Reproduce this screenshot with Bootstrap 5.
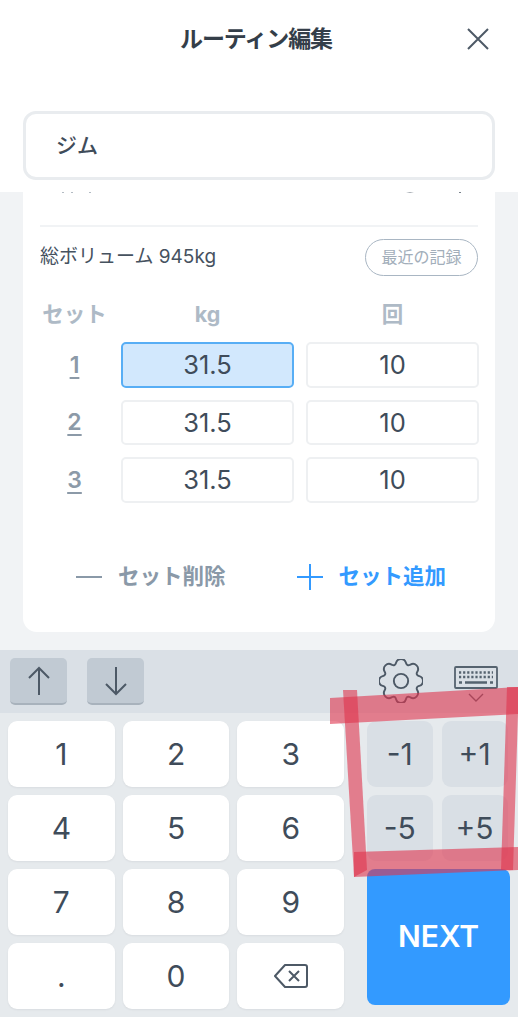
<!DOCTYPE html>
<html lang="ja">

<head>
    <meta charset="UTF-8">
    <meta name="viewport" content="width=device-width, initial-scale=1.0">
    <title>ルーティン編集</title>
    <link href="https://cdn.jsdelivr.net/npm/bootstrap@5.3.0/dist/css/bootstrap.min.css" rel="stylesheet">
    <style>
        html, body {
            height: 1024px;
            overflow: hidden;
        }

        body {
            position: relative;
            background: #fff;
            color: #3f4c5a;
            font-family: Inter, "Noto Sans CJK JP", sans-serif;
        }

        .top-area {
            height: 192px;
            padding: 0 23px;
        }

        .title-bar {
            height: 78px;
            padding: 0 6px 0 0;
        }

        .title-text {
            font-size: 23px;
            font-weight: 700;
            color: #343e49;
            line-height: 1;
            letter-spacing: -1.1px;
        }

        .title-side {
            width: 22px;
        }

        .name-box {
            height: 69px;
            margin-top: 33px;
            padding-left: 30px;
            border: 3px solid #e9ecef;
            border-radius: 13px;
            font-size: 21px;
            font-weight: 500;
            color: #3f4c5a;
        }

        .gray-area {
            height: 458px;
            padding: 0 23px;
            background: #f1f3f5;
        }

        .set-card {
            height: 440px;
            padding: 0 17px;
            background: #fff;
            border-radius: 0 0 14px 14px;
        }

        .clip-row {
            height: 35px;
            border-bottom: 2px solid #f1f3f5;
        }

        .volume-row {
            height: 60px;
            margin-bottom: 13px;
            font-size: 19px;
            color: #46525f;
        }

        .recent-pill {
            width: 113px;
            height: 37px;
            padding: 0;
            border: 1.5px solid #a9b6c3;
            border-radius: 19px;
            color: #a2aeba;
            font-size: 16px;
            line-height: 1;
        }

        .set-grid {
            display: grid;
            grid-template-columns: 69px 173px 173px;
            grid-template-rows: 30px repeat(3, 45.5px);
            gap: 12px;
        }

        .set-head {
            font-size: 21.5px;
            font-weight: 700;
            color: #aebac6;
            line-height: 1;
            text-align: center;
            align-self: center;
        }

        .set-no {
            font-size: 23px;
            font-weight: 600;
            color: #8c9aa8;
            text-align: center;
            text-decoration: underline;
            text-underline-offset: 4px;
            align-self: center;
        }

        .set-input {
            height: 45.5px;
            padding: 0;
            border: 2px solid #eef0f2;
            border-radius: 5px;
            color: #3f4c5a;
            font-size: 25.5px;
            text-align: center;
        }

        .set-input-on,
        .set-input-on:focus {
            background: #d2e8fd;
            border-color: #58aef5;
            box-shadow: none;
        }

        .action-row {
            margin-top: 61px;
            padding-left: 36px;
            gap: 71px;
            font-size: 21.5px;
            font-weight: 700;
            line-height: 1;
        }

        .action-off {
            color: #8a99a8;
        }

        .action-on {
            color: #339aff;
        }

        .key-top {
            height: 63px;
            padding: 8px 20px 0 10px;
            background: #dae0e6;
        }

        .arrow-btn {
            width: 57px;
            height: 47px;
            padding: 0;
            background: #c1cad3;
            border: 0;
            border-bottom: 2px solid #a8b2bc;
            border-radius: 5px;
            margin-right: 20px;
        }

        .gear-icon {
            margin: 1px 31px 0 0;
        }

        .kb-icon {
            margin-top: 8px;
        }

        .key-area {
            height: 304px;
            padding: 8px 8px 0;
            background: #e6eaed;
        }

        .num-pad {
            display: grid;
            grid-template-columns: repeat(3, 106.7px);
            grid-auto-rows: 65.5px;
            gap: 8.5px 8px;
        }

        .num-key,
        .side-key {
            display: flex;
            align-items: center;
            justify-content: center;
            padding: 0;
            border: 0;
            border-radius: 9px;
            color: #3f4c5a;
            font-size: 30px;
            line-height: 1;
        }

        .num-key {
            background: #fff;
            box-shadow: 0 1px 2px rgba(60, 70, 80, .08);
        }

        .side-pad {
            width: 143px;
            margin-left: 23px;
        }

        .side-grid {
            display: grid;
            grid-template-columns: 65.5px 66px;
            grid-auto-rows: 65.5px;
            gap: 8.5px 9px;
        }

        .side-key {
            background: #d9dfe5;
        }

        .next-key {
            width: 143px;
            height: 136px;
            margin-top: 8px;
            padding: 0;
            background: #339aff;
            border: 0;
            border-radius: 8px;
            color: #fff;
            font-size: 30px;
            font-weight: 600;
        }

        .mark-layer {
            position: absolute;
            top: 0;
            left: 0;
            pointer-events: none;
        }
    </style>
</head>

<body>
    <!-- header + routine name -->
    <div class="top-area">
        <div class="title-bar d-flex align-items-center justify-content-between">
            <span class="title-side"></span>
            <span class="title-text">ルーティン編集</span>
            <svg class="title-side" width="22" height="22" viewBox="0 0 22 22" fill="none" stroke="#4d5966" stroke-width="2">
                <path d="M1 1l20 20M21 1L1 21" />
            </svg>
        </div>
        <div class="name-box d-flex align-items-center">ジム</div>
    </div>

    <!-- exercise card, the row above the divider is scrolled away under the name box -->
    <div class="gray-area">
        <div class="set-card">
            <div class="clip-row">
                <svg class="d-block" width="438" height="5" viewBox="0 0 438 5" fill="none" stroke="#4d5966" stroke-width="1.5">
                    <path d="M360 -5a11 8 0 0 0 20 0M420 0v1" />
                    <path d="M23 0v1M32 0v1M50 0v1" stroke="#9aa5b0" />
                </svg>
            </div>
            <div class="volume-row d-flex align-items-center justify-content-between">
                <span>総ボリューム 945kg</span>
                <button type="button" class="btn recent-pill">最近の記録</button>
            </div>
            <div class="set-grid">
                <div class="set-head">セット</div>
                <div class="set-head">kg</div>
                <div class="set-head">回</div>

                <div class="set-no">1</div>
                <input class="form-control set-input set-input-on" value="31.5">
                <input class="form-control set-input" value="10">

                <div class="set-no">2</div>
                <input class="form-control set-input" value="31.5">
                <input class="form-control set-input" value="10">

                <div class="set-no">3</div>
                <input class="form-control set-input" value="31.5">
                <input class="form-control set-input" value="10">
            </div>
            <div class="action-row d-flex align-items-center">
                <div class="action-off d-flex align-items-center gap-3">
                    <svg width="26" height="26" viewBox="0 0 26 26" stroke="#8a99a8" stroke-width="2">
                        <path d="M0 13h26" />
                    </svg>
                    <span>セット削除</span>
                </div>
                <div class="action-on d-flex align-items-center gap-3">
                    <svg width="26" height="26" viewBox="0 0 26 26" stroke="#339aff" stroke-width="2">
                        <path d="M0 13h26M13 0v26" />
                    </svg>
                    <span>セット追加</span>
                </div>
            </div>
        </div>
    </div>

    <!-- keyboard toolbar -->
    <div class="key-top d-flex align-items-start">
        <button type="button" class="arrow-btn d-flex align-items-center justify-content-center">
            <svg width="24" height="30" viewBox="0 0 24 30" fill="none" stroke="#4d5966" stroke-width="2">
                <path d="M12 29V2M2 12L12 2l10 10" />
            </svg>
        </button>
        <button type="button" class="arrow-btn d-flex align-items-center justify-content-center">
            <svg width="24" height="30" viewBox="0 0 24 30" fill="none" stroke="#4d5966" stroke-width="2">
                <path d="M12 1v27M2 18l10 10 10-10" />
            </svg>
        </button>
        <div class="ms-auto d-flex align-items-start">
            <svg class="gear-icon" width="44" height="44" viewBox="0 0 16 16" fill="none" stroke="#4d5966" stroke-width=".7">
                <circle cx="8" cy="8" r="2.6" />
                <path d="M9.796 1.343c-.527-1.79-3.065-1.79-3.592 0l-.094.319a.873.873 0 0 1-1.255.52l-.292-.16c-1.64-.892-3.433.902-2.54 2.541l.159.292a.873.873 0 0 1-.52 1.255l-.319.094c-1.79.527-1.79 3.065 0 3.592l.319.094a.873.873 0 0 1 .52 1.255l-.16.292c-.892 1.64.901 3.434 2.541 2.54l.292-.159a.873.873 0 0 1 1.255.52l.094.319c.527 1.79 3.065 1.79 3.592 0l.094-.319a.873.873 0 0 1 1.255-.52l.292.16c1.64.893 3.434-.902 2.54-2.541l-.159-.292a.873.873 0 0 1 .52-1.255l.319-.094c1.79-.527 1.79-3.065 0-3.592l-.319-.094a.873.873 0 0 1-.52-1.255l.16-.292c.893-1.64-.902-3.433-2.541-2.54l-.292.159a.873.873 0 0 1-1.255-.52l-.094-.319z" />
            </svg>
            <svg class="kb-icon" width="44" height="38" viewBox="0 0 44 38" fill="none" stroke="#55636f">
                <rect x="1" y="1" width="42" height="21" rx="1" stroke-width="1.8" />
                <path d="M5 6.5h34M5 11h34" stroke-width="2.4" stroke-dasharray="2.2 1.9" />
                <path d="M5 16.5h3M11 16.5h22M36 16.5h3" stroke-width="2.4" />
                <path d="M15 28l7 7 7-7" stroke-width="1.4" />
            </svg>
        </div>
    </div>

    <!-- keys -->
    <div class="key-area d-flex">
        <div class="num-pad">
            <button type="button" class="num-key">1</button>
            <button type="button" class="num-key">2</button>
            <button type="button" class="num-key">3</button>
            <button type="button" class="num-key">4</button>
            <button type="button" class="num-key">5</button>
            <button type="button" class="num-key">6</button>
            <button type="button" class="num-key">7</button>
            <button type="button" class="num-key">8</button>
            <button type="button" class="num-key">9</button>
            <button type="button" class="num-key">.</button>
            <button type="button" class="num-key">0</button>
            <button type="button" class="num-key">
                <svg width="34" height="26" viewBox="0 0 34 26" fill="none" stroke="#4d5966" stroke-width="2" stroke-linejoin="round">
                    <path d="M11 2h20a2 2 0 0 1 2 2v18a2 2 0 0 1-2 2H11L1 13z" />
                    <path d="M15 8l10 10M25 8L15 18" />
                </svg>
            </button>
        </div>
        <div class="side-pad">
            <div class="side-grid">
                <button type="button" class="side-key">-1</button>
                <button type="button" class="side-key">+1</button>
                <button type="button" class="side-key">-5</button>
                <button type="button" class="side-key">+5</button>
            </div>
            <button type="button" class="next-key">NEXT</button>
        </div>
    </div>

    <!-- hand-drawn red annotation over the screenshot -->
    <svg class="mark-layer" width="518" height="1024" viewBox="0 0 518 1024" fill="#e0344c" fill-opacity=".6">
        <path d="M330 698L518 687V714L330 724z" />
        <path d="M343 690H357L367 870L354 877z" />
        <path d="M354 852L518 847V870L354 877z" />
        <path d="M507 687H518V714L513 870H501z" />
    </svg>

    <script src="https://cdn.jsdelivr.net/npm/bootstrap@5.3.0/dist/js/bootstrap.bundle.min.js"></script>
</body>

</html>
